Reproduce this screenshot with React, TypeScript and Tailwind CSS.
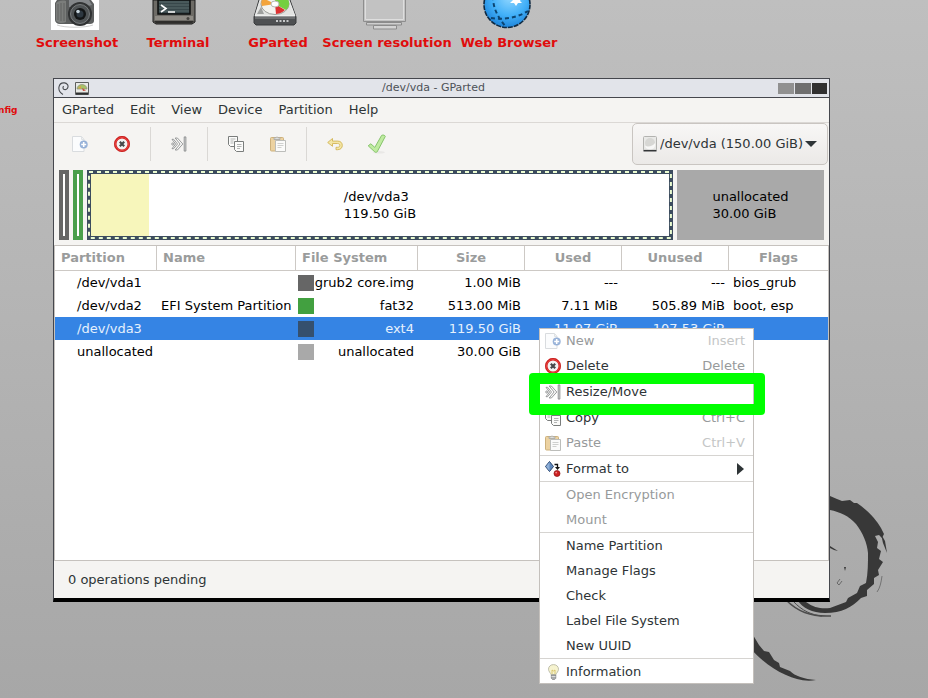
import React, { useState } from 'react';

interface IconProps {
  className?: string;
}

/* ---------- small icons (16px grid) ---------- */

function NewIcon({ className = '' }: IconProps) {
  return (
    <svg viewBox="0 0 16 16" className={`size-4 ${className}`} aria-hidden="true">
      <path d="M.5.5h9l2.500 3v12H.5z" fill="#fbfcfd" stroke="#d9dcdf" />
      <path d="M9.500.5v3H12" fill="none" stroke="#dfe2e4" />
      <circle cx="11.700" cy="8.500" r="4" fill="#7fa0cf" opacity=".8" />
      <path d="M11.700 6v5M9.200 8.500h5" stroke="#fff" strokeWidth="1.600" />
    </svg>
  );
}

function DeleteIcon({ className = '' }: IconProps) {
  return (
    <svg viewBox="0 0 16 16" className={`size-4 ${className}`} aria-hidden="true">
      <circle cx="8" cy="8" r="6.700" fill="#f2f2f2" stroke="#d9201f" strokeWidth="2.400" />
      <circle cx="8" cy="8" r="6.600" fill="none" stroke="#ea5a56" strokeWidth=".6" />
      <circle cx="8" cy="8" r="7.700" fill="none" stroke="#bb1616" strokeWidth=".5" />
      <path d="M5.800 5.800l4.400 4.400M10.200 5.800l-4.400 4.400" stroke="#45484a" strokeWidth="2.200" />
    </svg>
  );
}

function ResizeIcon({ className = '' }: IconProps) {
  return (
    <svg viewBox="0 0 16 16" className={`size-4 ${className}`} aria-hidden="true">
      <g fill="#fbfbfa" stroke="#808384" strokeWidth=".8" strokeLinejoin="round">
        <path d="M4.200 2h2.200l5.400 6-5.400 6H4.200l4.900-6z" />
        <path d="M1 3.300h1.600L6.500 8l-3.900 4.700H1L4.600 8z" />
        <circle cx="1.800" cy="8" r="1.100" />
        <path d="M13.200.9h1.700v14.200h-1.700z" fill="#d9dadb" />
      </g>
    </svg>
  );
}

function CopyIcon({ className = '' }: IconProps) {
  return (
    <svg viewBox="0 0 16 16" className={`size-4 ${className}`} aria-hidden="true">
      <g fill="#fbfbfa" stroke="#7a7d7c">
        <path d="M.5.5h9v10h-7l-2-2z" />
        <path d="M6.500 5.500h9v10h-7l-2-2z" />
      </g>
      <path d="M2.500 3h5M2.500 5h3M2.500 7h3M9 8.500h4.500M9 10.500h4.500M9 12.500h3" stroke="#b3b5b4" />
    </svg>
  );
}

function PasteIcon({ className = '' }: IconProps) {
  return (
    <svg viewBox="0 0 16 16" className={`size-4 ${className}`} aria-hidden="true">
      <rect x=".5" y="1.500" width="13" height="13.500" rx="1" fill="#ecd2a1" stroke="#cdb17c" />
      <path d="M4 3.500V1.800h1.800a1.300 1.300 0 0 1 2.400 0H10v1.700z" fill="#dcdedd" stroke="#a4a6a5" strokeWidth=".8" />
      <path d="M5.500 4.500h10v11h-10z" fill="#fbfbfa" stroke="#bcbdba" />
      <path d="M7.500 7.500h6M7.500 9.500h6M7.500 11.500h4" stroke="#cfd0ce" />
    </svg>
  );
}

function UndoIcon() {
  return (
    <svg viewBox="0 0 16 16" className="size-4" aria-hidden="true">
      <path
        d="M.7 6.500L5.500 2.500v2.600h5.300c3 0 4.500 2 4.500 4.300s-1.600 4.300-4.600 4.300H9v-2.400h1.600c1.500 0 2.200-.8 2.200-1.900s-.8-1.900-2.200-1.900H5.500v2.800z"
        fill="#f4e6a6"
        stroke="#d2b556"
        strokeWidth=".9"
        strokeLinejoin="round"
      />
    </svg>
  );
}

function ApplyIcon() {
  return (
    <svg viewBox="0 0 20 20" className="size-5" aria-hidden="true">
      <ellipse cx="12" cy="18.300" rx="6" ry="1.200" fill="#e9e8e6" />
      <path
        d="M1.200 11.800l2.600-2 4 3.600 6.800-12c1.500-.9 3.400-.1 3.700 1L10.200 17.800c-.8.700-1.800.7-2.400.1z"
        fill="#bfeba0"
        stroke="#86c46c"
        strokeLinejoin="round"
      />
    </svg>
  );
}

function FormatIcon() {
  return (
    <svg viewBox="0 0 16 16" className="size-4" aria-hidden="true">
      <path d="M4.500.5l4 5-4 5-4-5z" fill="#5d87bd" stroke="#28456e" />
      <path d="M4.500 1v9L1 5.500z" fill="#8fb0d8" />
      <path d="M9.500 3.500h3v3" fill="none" stroke="#111" strokeWidth="1.300" />
      <path d="M10 6h5l-2.500 3z" fill="#111" />
      <circle cx="12" cy="12.500" r="3" fill="#cf2222" stroke="#8a1010" strokeWidth=".7" />
      <circle cx="11.200" cy="11.600" r=".9" fill="#f08d8d" />
    </svg>
  );
}

function BulbIcon() {
  return (
    <svg viewBox="0 0 16 16" className="size-4" aria-hidden="true">
      <path d="M8.500.6c-3.200 0-5 2.200-5 4.600 0 2.200 2 3.600 2.500 5.500h5c.5-1.900 2.500-3.300 2.500-5.500 0-2.400-1.800-4.600-5-4.600z" fill="#f6f3cf" stroke="#b9b9a6" strokeWidth=".9" />
      <path d="M7 10V6l1.500 1L10 6v4" fill="none" stroke="#d3bd5a" strokeWidth=".8" />
      <path d="M6.300 11h4.500v3.300l-1.300 1.300H7.600l-1.300-1.300z" fill="#a9abad" stroke="#77797b" strokeWidth=".7" />
      <path d="M6.500 12.500h4" stroke="#e8e8e8" strokeWidth=".8" />
    </svg>
  );
}

function DiskIcon() {
  return (
    <svg viewBox="0 0 14 16" className="h-4 w-3.5" aria-hidden="true">
      <rect x=".5" y=".5" width="13" height="14" rx="1" fill="#e9e9e7" stroke="#b3b3b0" />
      <ellipse cx="7" cy="7" rx="5" ry="5" fill="#d7d7d4" />
      <path d="M2 10a5 5 0 0 0 10-3c-2 3-6 4-10 3z" fill="#f8f8f7" />
      <path d="M.5 14.700h13" stroke="#343638" strokeWidth="1.600" />
    </svg>
  );
}

/* ---------- desktop icons ---------- */

function CameraIcon() {
  return (
    <svg viewBox="0 0 56 30" className="h-[30px] w-14" aria-hidden="true">
      <path d="M2 0h48v30H2z" fill="#fff" />
      <path d="M8 0h34l3 4v17c0 2-2 3-4 3H11c-3 0-5-2-5-4V3z" fill="#5c5e5e" />
      <path d="M7 3c2-2 6-3 10-2v21c-4 2-8 1-10-1z" fill="#7b7d7b" />
      <path d="M9 4v16M12 3v18M15 3v18" stroke="#5a5c5b" strokeWidth=".8" />
      <path d="M20 0h20l3 5-8 2H20z" fill="#84878a" />
      <circle cx="31" cy="14" r="12" fill="#303233" />
      <circle cx="31" cy="14" r="9.500" fill="#4f5355" stroke="#85898b" strokeWidth=".8" />
      <circle cx="31" cy="14" r="6" fill="#131516" />
      <circle cx="31" cy="14" r="3.500" fill="#2d3740" />
      <circle cx="29" cy="11.500" r="1.800" fill="#c5d3dc" />
      <path d="M8 25c8 3 28 3 36 0" stroke="#cfcfcf" fill="none" />
    </svg>
  );
}

function TerminalIcon() {
  return (
    <svg viewBox="0 0 56 30" className="h-[30px] w-14" aria-hidden="true">
      <path d="M3 0h42v22l-3 2H6l-3-2z" fill="#6d6b66" stroke="#1b1b1a" />
      <path d="M5 16h38v4H5z" fill="#8e8b85" />
      <path d="M4 21h40l-2 2.500H6z" fill="#2e2d2b" />
      <path d="M8 0h32v14H8z" fill="#38474a" stroke="#0d0f0f" strokeWidth="1.500" />
      <path d="M9 2h30M9 5h30M9 8h30M9 11h30" stroke="#5b6c6d" />
      <path d="M11 5l5 3.500-5 3.500M18 12h7" stroke="#fff" strokeWidth="1.600" fill="none" />
      <circle cx="38" cy="18.500" r="1.500" fill="#454440" />
    </svg>
  );
}

function HardDiskIcon() {
  return (
    <svg viewBox="0 0 56 30" className="h-[30px] w-14" aria-hidden="true">
      <path d="M9 0h31l6 17v6l-2 2H6l-2-2v-6z" fill="#4e5052" stroke="#393b3c" />
      <path d="M10 0h29l6 16H5z" fill="#e2e3e1" stroke="#fff" strokeWidth=".8" />
      <ellipse cx="25" cy="4" rx="14" ry="10.500" fill="#f3f3ef" stroke="#9a9c98" />
      <path d="M25 4V-7a14 10.500 0 0 1 11 17z" fill="#74cf3f" />
      <path d="M25 4l10 6a14 10 0 0 1-9 4z" fill="#dc3131" />
      <path d="M25 4L12 6a13 10 0 0 1 1-8z" fill="#f3a43b" />
      <ellipse cx="25" cy="4" rx="4" ry="3" fill="#fff" stroke="#b5b7b3" />
      <path d="M14 14l-7 0 4-7z" fill="#9ea09e" />
      <path d="M5 18h40" stroke="#8b8d8e" />
      <path d="M26 21h14" stroke="#c6c8c9" strokeWidth="2" strokeDasharray="2 1.500" />
    </svg>
  );
}

function ScreenIcon() {
  return (
    <svg viewBox="0 0 56 30" className="h-[30px] w-14" aria-hidden="true">
      <path d="M4.500-2h42v23.500h-42z" fill="#c3c3c3" stroke="#8e8e8e" />
      <path d="M6.500-2h38v21.500h-38z" fill="#c2c2c2" stroke="#dedede" />
      <path d="M7.500 22.500h35v2.500h-35z" fill="#cfcfcf" stroke="#8b8b8b" />
      <path d="M14.500 25.500h23v3.500h-23z" fill="#d3d3d3" stroke="#8b8b8b" />
    </svg>
  );
}

function GlobeIcon() {
  return (
    <svg viewBox="0 0 56 30" className="h-[30px] w-14" aria-hidden="true">
      <defs>
        <radialGradient id="globe" cx=".55" cy=".35" r=".65">
          <stop offset="0" stopColor="#8fd6ff" />
          <stop offset=".6" stopColor="#42b0f8" />
          <stop offset="1" stopColor="#1f86dc" />
        </radialGradient>
      </defs>
      <circle cx="26" cy="4.500" r="23" fill="url(#globe)" stroke="#102a42" strokeWidth="1.600" strokeDasharray="5 1" />
      <path d="M12-4c0 12 4 20 13 31" fill="none" stroke="#0c4470" strokeWidth="2" strokeDasharray="4 3" />
      <path d="M10 18c12 2 26 0 37-7" fill="none" stroke="#0c4470" strokeWidth="2" strokeDasharray="4 3" />
      <path d="M35-6l2 4 4-1-2 4 2 2-4 0-2 3-2-3-4 0 3-3-2-3 4 1z" fill="#fff" />
    </svg>
  );
}

const shortcuts = [
  { label: 'Screenshot', icon: CameraIcon, position: 'left-[5px]' },
  { label: 'Terminal', icon: TerminalIcon, position: 'left-[106px]' },
  { label: 'GParted', icon: HardDiskIcon, position: 'left-[206px]' },
  { label: 'Screen resolution', icon: ScreenIcon, position: 'left-[315px]' },
  { label: 'Web Browser', icon: GlobeIcon, position: 'left-[437px]' },
];

// ink swirl of the desktop wallpaper
function Wallpaper() {
  return (
    <svg viewBox="0 0 928 698" className="absolute top-0 left-0 h-[698px] w-[928px]" aria-hidden="true">
      <g fill="#383838">
        <path d="M815 494C822 494 826 495 830 496L837 499L842 501L850 500L854 503L857 503C866 509 876 519 881 528L884 534L882 538L879 535L875 536L878 542L877 548L881 551L879 559L883 562L878 570L879 575L874 578L874 584L867 590L867 596L861 598C852 607 842 613 825 613C812 613 803 608 797 600L806 602C814 608 822 609 830 608L846 602L848 598L857 593L860 586L866 583C868 573 868 563 868 553C867 543 863 533 856 524C849 516 840 512 830 510L815 508z" />
        <path d="M750 630L759 645L764 651L769 652L774 660L779 663L780 667L790 671C795 676 804 679 816 680C805 682 795 679 786 675C772 669 760 659 750 648z" />
        <path d="M881 534L885 541L887 553L883 543z" />
        <path d="M830 546L838 551L834 550L830 548zM844 567h2l-1 4z" />
      </g>
      <g fill="none" stroke="#4c4c4c">
        <path d="M786 600C797 611 810 617 831 616" strokeWidth="1.500" />
        <path d="M793 601C802 611 812 615 822 616" />
        <path d="M882 576C881 583 880 588 877 592" strokeWidth=".6" />
        <path d="M840 579l-3 4 2 2 3-4" strokeWidth=".7" />
      </g>
    </svg>
  );
}

const partitions = [
  { path: '/dev/vda1', name: '', fs: 'grub2 core.img', color: 'bg-[#666666]', size: '1.00 MiB', used: '---', unused: '---', flags: 'bios_grub' },
  { path: '/dev/vda2', name: 'EFI System Partition', fs: 'fat32', color: 'bg-[#42a040]', size: '513.00 MiB', used: '7.11 MiB', unused: '505.89 MiB', flags: 'boot, esp' },
  { path: '/dev/vda3', name: '', fs: 'ext4', color: 'bg-[#35506e]', size: '119.50 GiB', used: '11.97 GiB', unused: '107.53 GiB', flags: '' },
  { path: 'unallocated', name: '', fs: 'unallocated', color: 'bg-[#a9a9a9]', size: '30.00 GiB', used: '', unused: '', flags: '' },
];

function TitleBar() {
  return (
    <div className="flex h-[19px] items-center border-b border-[#45474d] bg-[#e2e4ea] pr-0.5 pl-1">
      <div className="flex items-center gap-1.5">
        <svg viewBox="0 0 11 13" className="h-[13px] w-[11px]" aria-hidden="true">
          <path d="M5 12.500C1.500 10.500.5 7.500 1 4.800 1.600 2 4 .6 6.500.9c2.500.3 3.800 2.100 3.500 4C9.700 6.800 8 8 6.300 7.500 4.900 7 4.500 5.200 5.700 4.300" fill="none" stroke="#4a4d52" strokeWidth="1.100" />
        </svg>
        <svg viewBox="0 0 14 13" className="h-[13px] w-3.5" aria-hidden="true">
          <path d="M.5.5h13v12H.5z" fill="#e9eae6" stroke="#5d5f5f" />
          <path d="M2 7a5 4.500 0 0 1 10 0z" fill="#a9c266" stroke="#8c8e7c" strokeWidth=".7" />
          <path d="M7 6l4 2.500-3 .5z" fill="#c64a3c" />
          <path d="M3 6l3-2v3z" fill="#dca04c" />
          <path d="M1 10.500h12v2H1z" fill="#2e3030" />
        </svg>
      </div>
      <h1 className="flex-1 text-center text-[11px] leading-[18px] text-[#4d5157]">/dev/vda - GParted</h1>
      <div className="flex gap-px">
        <button aria-label="Minimize" className="h-[11px] w-4 bg-[#919191]" />
        <button aria-label="Maximize" className="h-[11px] w-4 bg-[#6f6f6f]" />
        <button aria-label="Close" className="h-[11px] w-[15px] bg-[#303030]" />
      </div>
    </div>
  );
}

function ToolButton({ label, children }: { label: string; children: React.ReactNode }) {
  return (
    <button aria-label={label} className="flex h-full w-[42px] items-center justify-center">
      {children}
    </button>
  );
}

function ToolSeparator() {
  return <span className="mx-[7px] h-[34px] w-px bg-[#dad8d5]" />;
}

function ToolBar() {
  return (
    <div className="flex h-[42px] items-center">
      <div className="flex h-full flex-1 items-center pl-[5px]">
        <ToolButton label="New"><NewIcon /></ToolButton>
        <ToolButton label="Delete"><DeleteIcon /></ToolButton>
        <ToolSeparator />
        <ToolButton label="Resize/Move"><ResizeIcon /></ToolButton>
        <ToolSeparator />
        <ToolButton label="Copy"><CopyIcon /></ToolButton>
        <ToolButton label="Paste"><PasteIcon /></ToolButton>
        <ToolSeparator />
        <ToolButton label="Undo"><UndoIcon /></ToolButton>
        <ToolButton label="Apply"><ApplyIcon /></ToolButton>
      </div>
      <label className="relative mr-px flex h-[42px] items-center rounded-[5px] border border-[#c9c5c1] bg-linear-to-b from-[#f8f7f6] to-[#ebe9e7] pl-2.5">
        <DiskIcon />
        <select
          aria-label="Device"
          className="h-full appearance-none bg-transparent pr-[23px] pl-[3px] text-[13px] text-[#2e3436] outline-none"
        >
          <option>/dev/vda (150.00 GiB)</option>
        </select>
        <svg viewBox="0 0 12 6" className="pointer-events-none absolute right-2.5 h-1.5 w-3" aria-hidden="true">
          <path d="M0 0h12L6 6z" fill="#2e3436" />
        </svg>
      </label>
    </div>
  );
}

function DiskMap() {
  return (
    <div className="flex h-20 gap-1 p-[5px] text-[13px] leading-[17px] text-black">
      <div className="w-2.5 border-4 border-[#666666] bg-white" />
      <div className="w-2.5 border-4 border-[#4a9f4b] bg-white" />
      <div className="flex grow-[1195] basis-0">
        <div className="relative flex w-full items-center justify-center border-4 border-[#3c4c5e] bg-white">
          <div className="absolute inset-y-0 left-0 w-1/10 bg-[#f7f6bb]" />
          <svg className="absolute -inset-0.5 h-[calc(100%+4px)] w-[calc(100%+4px)] overflow-visible" aria-hidden="true">
            <rect width="100%" height="100%" fill="none" stroke="#eafbd0" strokeWidth="2" strokeDasharray="4 4" />
          </svg>
          <p className="relative">/dev/vda3<br />119.50 GiB</p>
        </div>
      </div>
      <div className="flex grow-[300] basis-0 items-center justify-center bg-[#a9a9a9]">
        <p>unallocated<br />30.00 GiB</p>
      </div>
    </div>
  );
}

function PartitionTable() {
  const [selected, setSelected] = useState('/dev/vda3');
  const th = 'h-[25px] border-b border-[#cdc9c5] p-0';

  return (
    <div className="min-h-[316px] border border-[#c6c2be] bg-white">
      <table className="w-full table-fixed border-separate border-spacing-0 text-[13px] leading-[22px] text-black">
        <thead className="text-[#9a9c9c]">
          <tr>
            <th className={`${th} w-[102px] border-r pl-1.5 text-left`}>Partition</th>
            <th className={`${th} w-[139px] border-r pl-1.5 text-left`}>Name</th>
            <th className={`${th} w-[122px] border-r pl-1.5 text-left`}>File System</th>
            <th className={`${th} w-[107px] border-r`}>Size</th>
            <th className={`${th} w-[97px] border-r`}>Used</th>
            <th className={`${th} w-[107px] border-r`}>Unused</th>
            <th className={th}>Flags</th>
          </tr>
        </thead>
        <tbody className="whitespace-nowrap">
          {partitions.map((p) => (
            <tr
              key={p.path}
              onClick={() => setSelected(p.path)}
              className={selected === p.path ? 'h-[23px] bg-[#3584e4] text-[#e6f1fd]' : 'h-[23px]'}
            >
              <td className="p-0 pl-[22px]">{p.path}</td>
              <td className="p-0 pl-1">{p.name}</td>
              <td className="p-0 pr-1 pl-0.5">
                <div className="flex items-center justify-between">
                  <span className={`size-4 shrink-0 ${p.color}`} />
                  {p.fs}
                </div>
              </td>
              <td className="p-0 pr-1 text-right">{p.size}</td>
              <td className="p-0 pr-1 text-right">{p.used}</td>
              <td className="p-0 pr-1 text-right">{p.unused}</td>
              <td className="p-0 pl-1">{p.flags}</td>
            </tr>
          ))}
        </tbody>
      </table>
    </div>
  );
}

interface MenuEntryProps {
  label: string;
  icon?: React.ReactNode;
  accel?: string;
  disabled?: boolean;
  submenu?: boolean;
}

function MenuEntry({ label, icon, accel, disabled, submenu }: MenuEntryProps) {
  return (
    <button
      role="menuitem"
      disabled={disabled}
      className="flex h-[25px] w-full items-center gap-[5px] pr-[9px] pl-1.5 text-left text-[#2e3436] disabled:text-[#979a9b]"
    >
      <span className="size-4 shrink-0">{icon}</span>
      <span className="flex-1">{label}</span>
      {accel && <span className={disabled ? 'text-[#c4c6c6]' : 'text-[#979a9b]'}>{accel}</span>}
      {submenu && (
        <svg viewBox="0 0 8 12" className="h-3 w-2" aria-hidden="true">
          <path d="M0 0l7 6-7 6z" fill="#2e3436" />
        </svg>
      )}
    </button>
  );
}

function MenuSeparator() {
  return <div role="separator" className="h-px bg-[#d6d4d1]" />;
}

function ContextMenu() {
  return (
    <div
      role="menu"
      className="absolute top-[328px] left-[539px] w-[215px] bg-white text-[13px] outline-1 -outline-offset-1 outline-[#c4c0bc]"
    >
      <MenuEntry label="New" icon={<NewIcon />} accel="Insert" disabled />
      <MenuEntry label="Delete" icon={<DeleteIcon />} accel="Delete" />
      <MenuSeparator />
      <MenuEntry label="Resize/Move" icon={<ResizeIcon />} />
      <MenuSeparator />
      <MenuEntry label="Copy" icon={<CopyIcon />} accel="Ctrl+C" />
      <MenuEntry label="Paste" icon={<PasteIcon />} accel="Ctrl+V" disabled />
      <MenuSeparator />
      <MenuEntry label="Format to" icon={<FormatIcon />} submenu />
      <MenuSeparator />
      <MenuEntry label="Open Encryption" disabled />
      <MenuEntry label="Mount" disabled />
      <MenuSeparator />
      <MenuEntry label="Name Partition" />
      <MenuEntry label="Manage Flags" />
      <MenuEntry label="Check" />
      <MenuEntry label="Label File System" />
      <MenuEntry label="New UUID" />
      <MenuSeparator />
      <MenuEntry label="Information" icon={<BulbIcon />} />
    </div>
  );
}

export default function App() {
  return (
    <div className="relative min-h-screen overflow-hidden bg-linear-to-b from-[#bfbfbf] to-[#a7a7a7] font-['DejaVu_Sans',sans-serif]">
      <Wallpaper />

      {shortcuts.map(({ label, icon: Icon, position }) => (
        <button key={label} className={`absolute top-0 flex w-36 flex-col items-center ${position}`}>
          <Icon />
          <span className="mt-1 text-[13px] leading-[18px] font-bold whitespace-nowrap text-[#e00c0c]">{label}</span>
        </button>
      ))}
      <span className="absolute top-[104px] -left-0.5 text-[9px] leading-3 font-bold text-[#e00c0c]">nfig</span>

      <main className="absolute top-[78px] right-[98px] left-[53px] border border-b-4 border-[#45474d] border-b-black bg-[#f5f4f2]">
        <TitleBar />
        <nav className="flex h-[25px] items-center border-b border-[#dbd8d5] text-[13px] text-[#2e3436]">
          {['GParted', 'Edit', 'View', 'Device', 'Partition', 'Help'].map((item) => (
            <button key={item} className="h-full px-2">{item}</button>
          ))}
        </nav>
        <ToolBar />
        <DiskMap />
        <PartitionTable />
        <footer className="flex h-[37px] items-center px-3.5 text-[13px] text-[#2e3436]">0 operations pending</footer>
      </main>

      <ContextMenu />
      <div className="pointer-events-none absolute top-[373px] left-[529px] h-[42px] w-[236px] rounded border-11 border-[#00ff00]" />
    </div>
  );
}
